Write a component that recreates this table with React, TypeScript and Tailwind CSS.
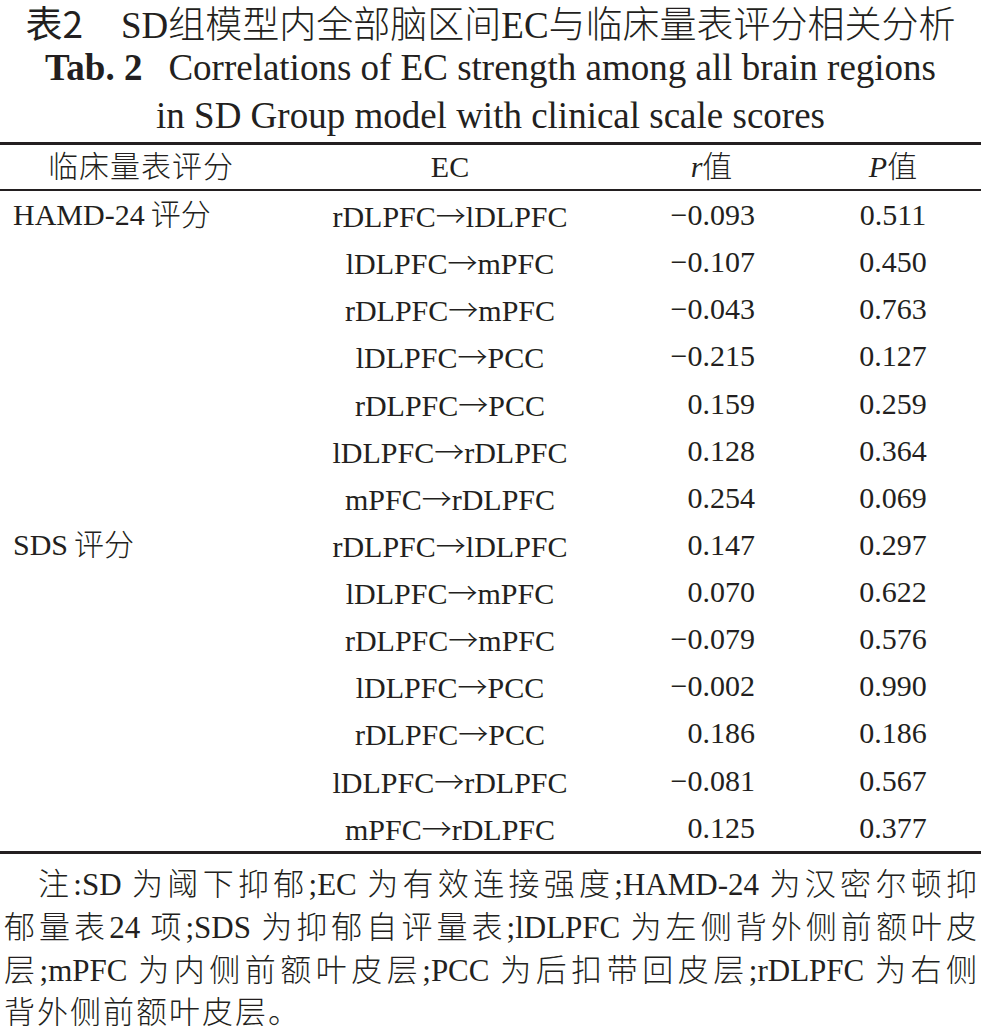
import React from "react";

type Row = { scale?: [string, string]; from: string; to: string; r: string; p: string };

const rows: Row[] = [
  { scale: ["HAMD-24", "评分"], from: "rDLPFC", to: "lDLPFC", r: "−0.093", p: "0.511" },
  { from: "lDLPFC", to: "mPFC", r: "−0.107", p: "0.450" },
  { from: "rDLPFC", to: "mPFC", r: "−0.043", p: "0.763" },
  { from: "lDLPFC", to: "PCC", r: "−0.215", p: "0.127" },
  { from: "rDLPFC", to: "PCC", r: "0.159", p: "0.259" },
  { from: "lDLPFC", to: "rDLPFC", r: "0.128", p: "0.364" },
  { from: "mPFC", to: "rDLPFC", r: "0.254", p: "0.069" },
  { scale: ["SDS", "评分"], from: "rDLPFC", to: "lDLPFC", r: "0.147", p: "0.297" },
  { from: "lDLPFC", to: "mPFC", r: "0.070", p: "0.622" },
  { from: "rDLPFC", to: "mPFC", r: "−0.079", p: "0.576" },
  { from: "lDLPFC", to: "PCC", r: "−0.002", p: "0.990" },
  { from: "rDLPFC", to: "PCC", r: "0.186", p: "0.186" },
  { from: "lDLPFC", to: "rDLPFC", r: "−0.081", p: "0.567" },
  { from: "mPFC", to: "rDLPFC", r: "0.125", p: "0.377" },
];

// thin spaces (U+2009) sit between Latin and CJK, they are not stretched by justify
const notes = [
  "注:SD\u2009为阈下抑郁;EC\u2009为有效连接强度;HAMD-24\u2009为汉密尔顿抑",
  "郁量表24\u2009项;SDS\u2009为抑郁自评量表;lDLPFC\u2009为左侧背外侧前额叶皮",
  "层;mPFC\u2009为内侧前额叶皮层;PCC\u2009为后扣带回皮层;rDLPFC\u2009为右侧",
];

export default function App() {
  return (
    <div className="w-[981px] h-[1026px] overflow-hidden bg-white text-[#231f20] font-['Liberation_Serif','Noto_Sans_CJK_SC',serif]">
      {/* Caption */}
      <div className="text-[37px] text-center">
        <div className="h-[44px] leading-[44px] whitespace-nowrap">
          <span className="font-['Noto_Sans_CJK_SC',sans-serif]">表2</span>
          <span className="ml-[38px] font-light">SD组模型内全部脑区间EC与临床量表评分相关分析</span>
        </div>
        <div className="h-[48px] leading-[48px] whitespace-nowrap">
          <span className="font-bold">Tab. 2</span>
          <span className="ml-[26px]">Correlations of EC strength among all brain regions</span>
        </div>
        <div className="h-[48px] leading-[48px] whitespace-nowrap">
          in SD Group model with clinical scale scores
        </div>
      </div>

      {/* Table */}
      <div className="mt-[2px] border-t-[3px] border-b-[3px] border-[#231f20] text-[30px]">
        <div className="grid grid-cols-[282px_336px_187px_176px] h-[46px] leading-[44px] border-b-2 border-[#231f20]">
          <div className="text-center font-light tracking-[1px]">临床量表评分</div>
          <div className="text-center">EC</div>
          <div className="text-center">
            <span className="italic">r</span>
            <span className="font-light">值</span>
          </div>
          <div className="text-center">
            <span className="italic">P</span>
            <span className="font-light">值</span>
          </div>
        </div>
        {rows.map((row, i) => (
          <div
            key={i}
            className="grid grid-cols-[282px_336px_187px_176px] h-[47.14px] leading-[47px]"
          >
            <div className="pl-[13px] whitespace-nowrap">
              {row.scale && (
                <>
                  {row.scale[0]}
                  <span className="ml-[6px] font-light">{row.scale[1]}</span>
                </>
              )}
            </div>
            <div className="text-center whitespace-nowrap">
              {row.from}
              <span className="font-['Noto_Sans_CJK_SC',sans-serif] font-light">→</span>
              {row.to}
            </div>
            <div className="text-right pr-[50px]">{row.r}</div>
            <div className="text-center">{row.p}</div>
          </div>
        ))}
      </div>

      {/* Notes */}
      <div className="mt-[9px] px-[4px] text-[31px] leading-[43px] font-light">
        {notes.map((line, i) => (
          <div
            key={i}
            className={`whitespace-nowrap text-justify [text-align-last:justify] ${i === 0 ? "pl-[34px]" : ""}`}
          >
            {line}
          </div>
        ))}
        <div className="mt-[6px] leading-[30px] tracking-[2px]">背外侧前额叶皮层。</div>
      </div>
    </div>
  );
}
